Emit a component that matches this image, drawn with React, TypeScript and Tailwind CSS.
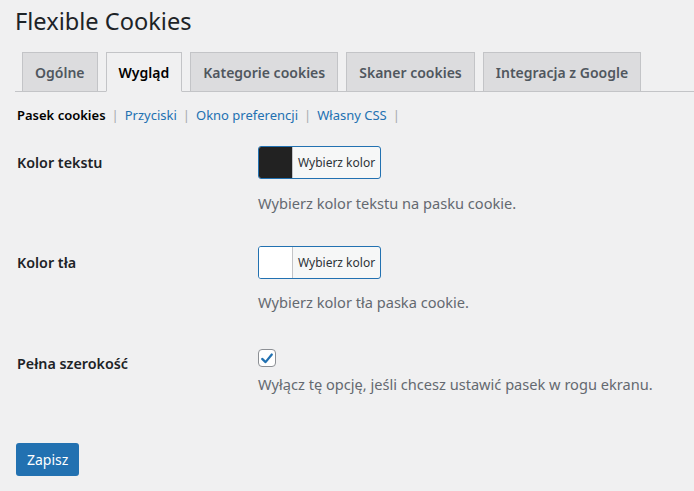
import React from "react";

const TABS = ["Ogólne", "Wygląd", "Kategorie cookies", "Skaner cookies", "Integracja z Google"];
const SUBNAV = ["Przyciski", "Okno preferencji", "Własny CSS"];

function ColorPicker({ color }: { color: string }) {
  return (
    <button className="flex h-[33px] w-[123px] items-stretch overflow-hidden rounded-[3px] border border-[#2271b1] bg-[#f6f7f7] p-0">
      <span className="w-[34px] border-r border-[#c3c4c7]" style={{ background: color }} />
      <span className="flex flex-1 items-center justify-center text-[12px] text-[#2c3338]">Wybierz kolor</span>
    </button>
  );
}

export default function App() {
  return (
    <div className="min-h-[491px] w-full bg-[#f0f0f1] font-['Noto_Sans',sans-serif] text-[14.3px] text-[#1d2327]">
      <div className="pt-[6px]">
        <h1 className="pl-[15px] text-[23.6px] font-normal leading-[30px] text-[#1d2327]">Flexible Cookies</h1>

        <nav className="ml-[15px] mt-[16px] flex gap-[8px] border-b border-[#c3c4c7] pl-[7px]">
          {TABS.map((tab) => {
            const active = tab === "Wygląd";
            return (
              <span
                key={tab}
                className={
                  active
                    ? "-mb-px flex h-[40px] items-center border border-[#c3c4c7] border-b-[#f0f0f1] bg-[#f0f0f1] px-[12px] text-[14px] font-semibold text-black"
                    : "-mb-px flex h-[40px] items-center border border-[#c3c4c7] bg-[#dcdcde] px-[12px] text-[14px] font-semibold text-[#50575e]"
                }
              >
                {tab}
              </span>
            );
          })}
        </nav>

        <div className="mt-[13px] flex items-center pl-[17px] text-[13px] leading-[20px]">
          <span className="font-semibold text-black">Pasek cookies</span>
          {SUBNAV.map((item) => (
            <React.Fragment key={item}>
              <span className="px-[6px] text-[#a7aaad]">|</span>
              <span className="text-[#2271b1]">{item}</span>
            </React.Fragment>
          ))}
          <span className="px-[6px] text-[#a7aaad]">|</span>
        </div>

        <div className="mt-[21px] flex flex-col pl-[17px]">
          <div className="flex">
            <div className="w-[241px] font-semibold leading-[33px]">Kolor tekstu</div>
            <div className="flex flex-col">
              <ColorPicker color="#222222" />
              <p className="mt-[14px] text-[14.6px] leading-[20px] text-[#646970]">Wybierz kolor tekstu na pasku cookie.</p>
            </div>
          </div>

          <div className="mt-[33px] flex">
            <div className="w-[241px] font-semibold leading-[33px]">Kolor tła</div>
            <div className="flex flex-col">
              <ColorPicker color="#ffffff" />
              <p className="mt-[13px] text-[14.6px] leading-[20px] text-[#646970]">Wybierz kolor tła paska cookie.</p>
            </div>
          </div>

          <div className="mt-[37px] flex">
            <div className="w-[241px] pt-[5px] font-semibold leading-[20px]">Pełna szerokość</div>
            <div className="flex flex-col">
              <span className="flex h-[18px] w-[18px] items-center justify-center rounded-[4px] border border-[#8c8f94] bg-white">
                <svg viewBox="0 0 20 20" className="h-[17px] w-[17px]">
                  <path d="M4 10.5 L8.2 14.5 L16 5" fill="none" stroke="#2271b1" strokeWidth="2.8" strokeLinecap="round" strokeLinejoin="round" />
                </svg>
              </span>
              <p className="mt-[7px] text-[14.6px] leading-[20px] text-[#646970]">Wyłącz tę opcję, jeśli chcesz ustawić pasek w rogu ekranu.</p>
            </div>
          </div>

          <div className="mt-[49px]">
            <button className="-ml-px h-[33px] rounded-[3px] bg-[#2271b1] px-[11px] text-[14px] text-white">Zapisz</button>
          </div>
        </div>
      </div>
    </div>
  );
}
